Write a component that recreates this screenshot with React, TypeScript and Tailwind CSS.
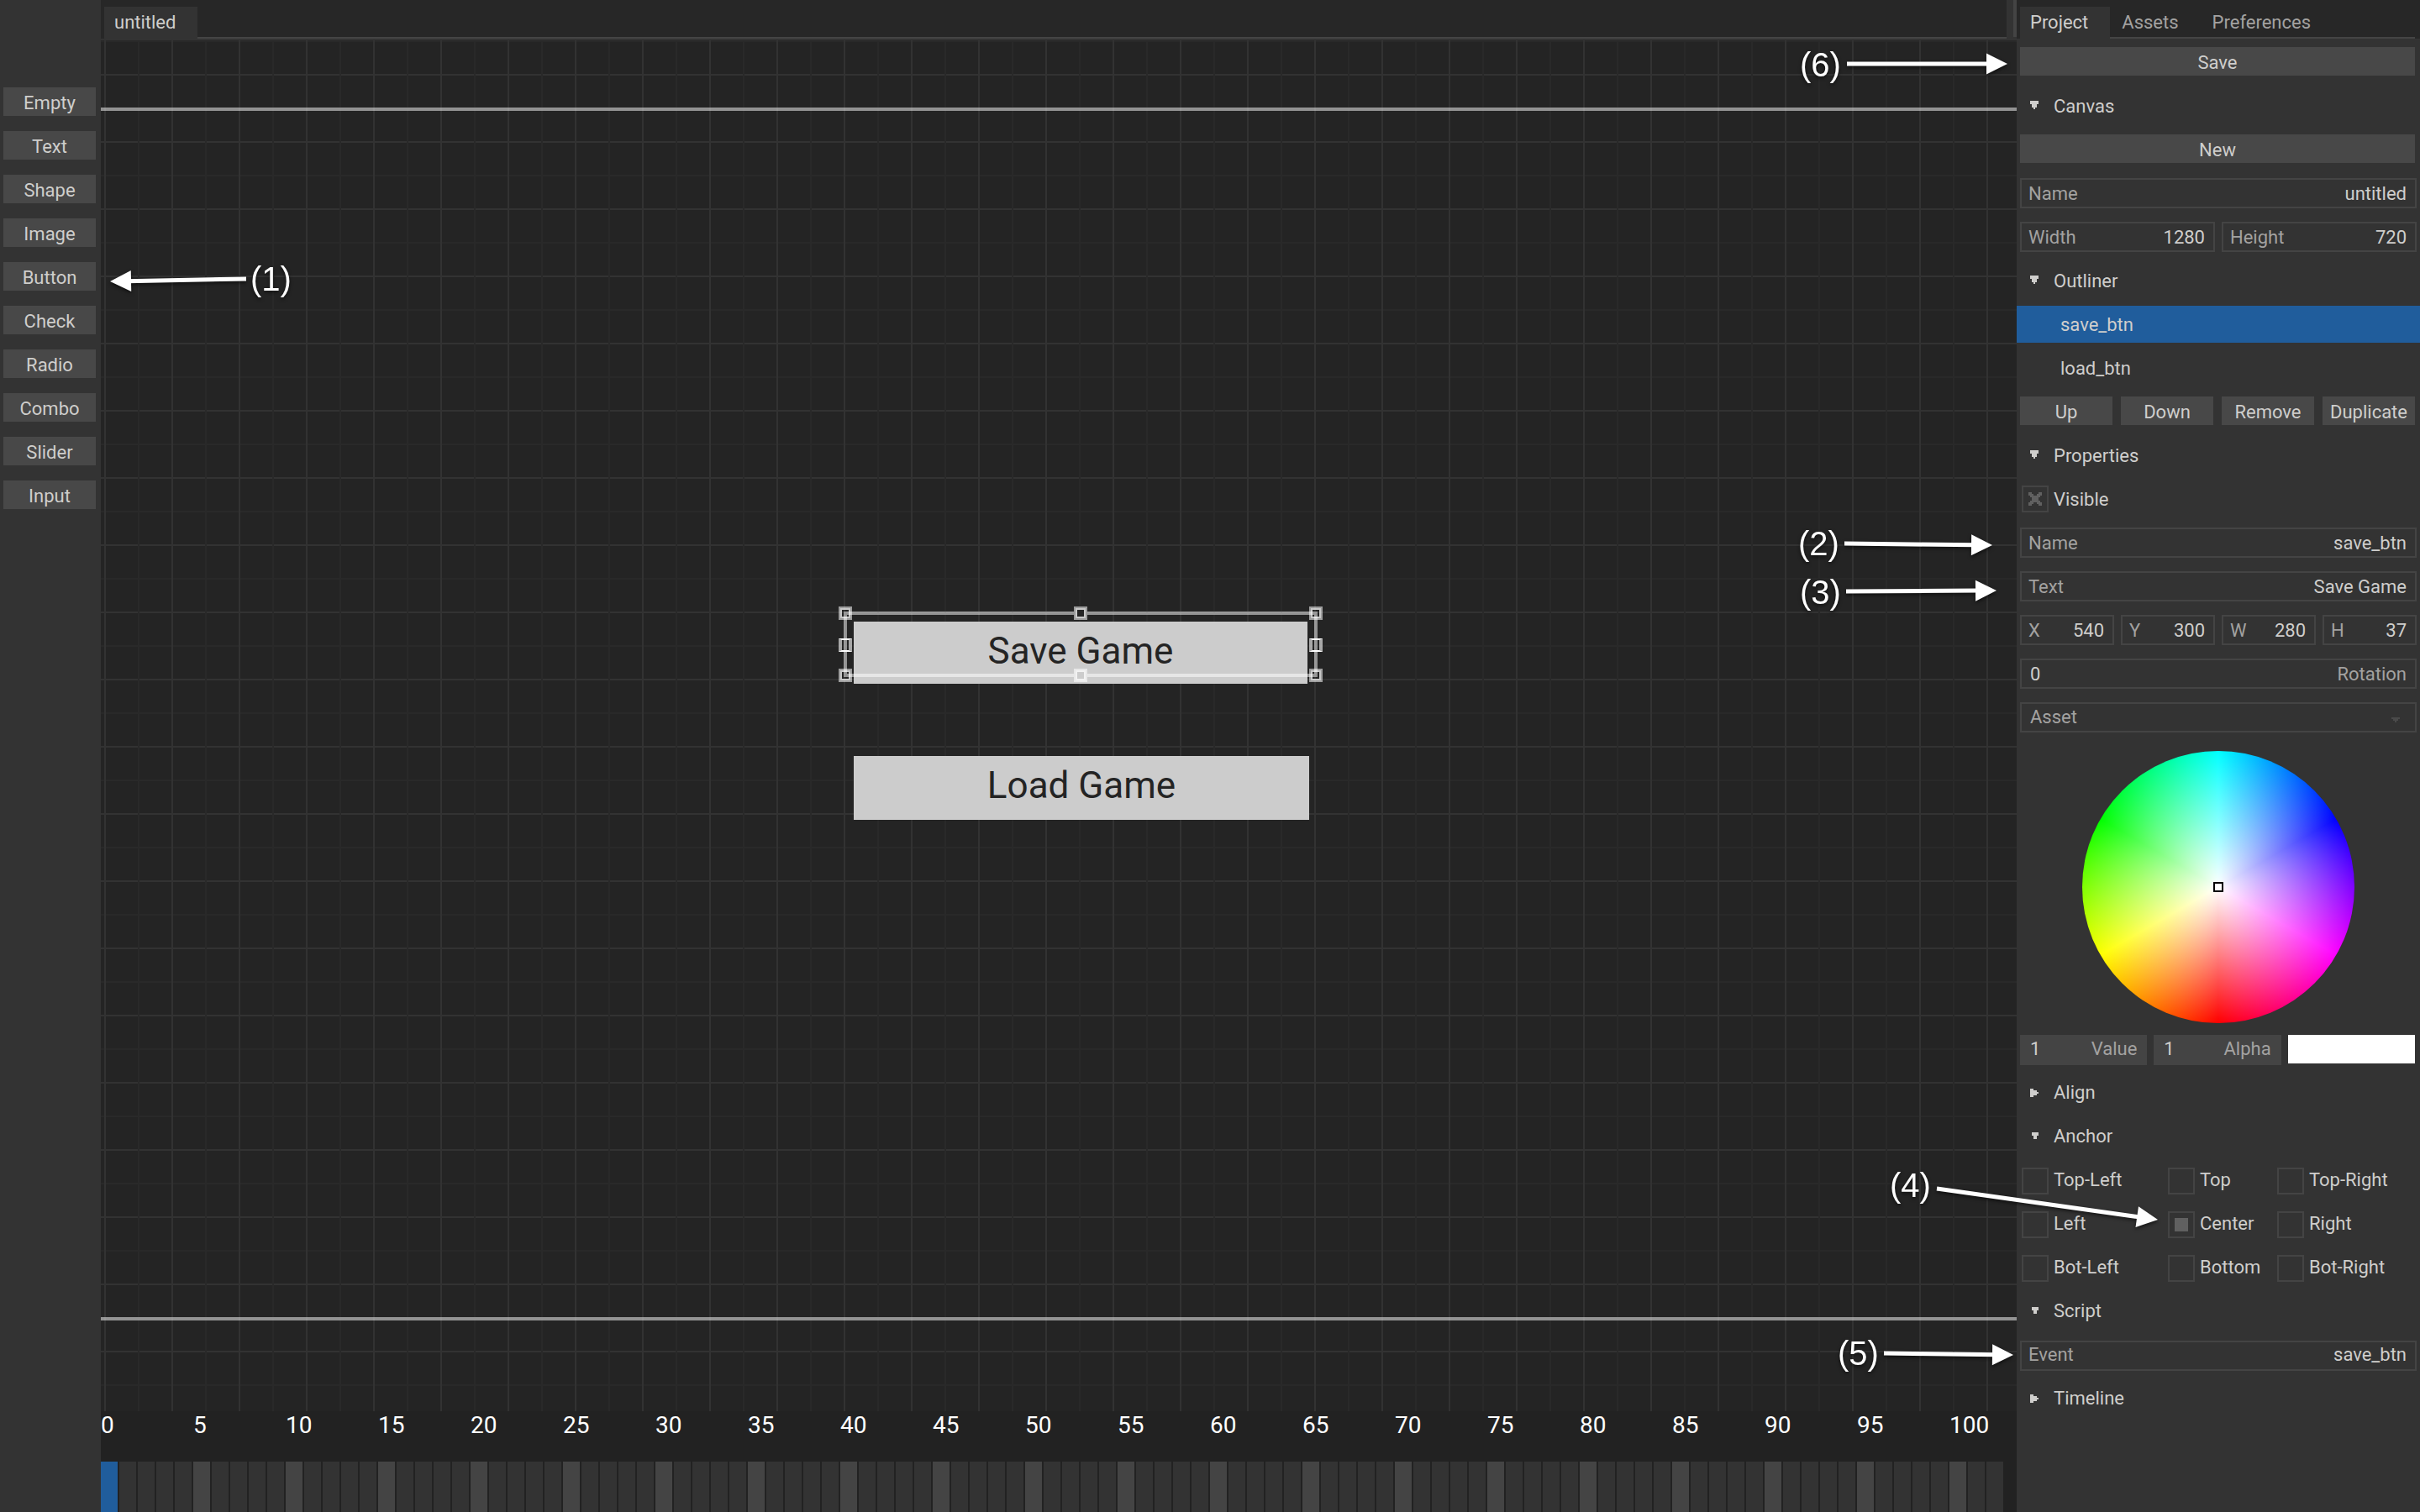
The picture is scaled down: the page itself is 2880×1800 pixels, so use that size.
import React, { useState } from "react";

const TOOLS = ["Empty", "Text", "Shape", "Image", "Button", "Check", "Radio", "Combo", "Slider", "Input"];
const FRAME_COUNT = 103;

function Tab({ label, active = false }: { label: string; active?: boolean }) {
  return (
    <button
      type="button"
      role="tab"
      aria-selected={active}
      className={
        active
          ? "h-[38px] border-b-2 border-[#333333] bg-[#333333] pr-[26px] pl-3 text-[#cfcecc]"
          : "h-[38px] border-b-2 border-[#444444] pr-[26px] pl-[14px] text-[#a3a2a1]"
      }
    >
      {label}
    </button>
  );
}

function PushButton({ children }: { children: React.ReactNode }) {
  return (
    <button type="button" className="h-[34px] min-w-0 flex-1 bg-[#484848] text-center whitespace-nowrap">
      <span className="block h-full">{children}</span>
    </button>
  );
}

function Row({ children }: { children: React.ReactNode }) {
  return <div className="flex h-[52px] items-start pt-2 pr-1.5 pl-1">{children}</div>;
}

const ARROWS = {
  down: "M0 0h10v4H8v4H6v2H4V8H2V4H0z",
  downSmall: "M2 0h8v4H8v4H4V4H2z",
  right: "M0 0h4v2h4v2h2v2H8v2H4v2H0z",
};

function Header({ label, arrow = "down" }: { label: string; arrow?: keyof typeof ARROWS }) {
  return (
    <button
      type="button"
      aria-expanded={arrow !== "right"}
      className="flex h-[52px] w-full items-start gap-[18px] pt-2 pl-4 text-left"
    >
      <svg width="10" height="10" viewBox="0 0 10 10" shapeRendering="crispEdges" className="mt-3">
        <path d={ARROWS[arrow]} fill="#cfcecc" />
      </svg>
      {label}
    </button>
  );
}

function Field({
  id,
  label,
  value,
  low = false,
}: {
  id: string;
  label: string;
  value: string;
  low?: boolean;
}) {
  return (
    <div
      className={
        low
          ? "flex h-9 min-w-0 flex-1 items-start border-2 border-[#444444] pr-2.5 pl-2 leading-[30px]"
          : "flex h-9 min-w-0 flex-1 items-start border-2 border-[#444444] pr-2.5 pl-2 leading-[34px]"
      }
    >
      <label htmlFor={id} className="text-[#a3a2a1]">
        {label}
      </label>
      <input id={id} type="text" defaultValue={value} className="w-0 min-w-0 flex-1 bg-transparent text-right outline-none" />
    </div>
  );
}

function NumberBox({ id, label, value }: { id: string; label: string; value: string }) {
  return (
    <div className="flex h-9 min-w-0 items-start bg-[#444444] px-3">
      <input id={id} type="text" defaultValue={value} className="w-0 min-w-0 flex-1 bg-transparent outline-none" />
      <label htmlFor={id} className="text-[#a3a2a1]">
        {label}
      </label>
    </div>
  );
}

function AnchorRow({ options }: { options: string[] }) {
  return (
    <div className="grid h-[52px] grid-cols-[174px_130px_1fr] items-start pl-1.5">
      {options.map((option) => (
        <label key={option} className="flex items-start gap-1.5 pt-2">
          <input
            type="radio"
            name="anchor"
            defaultChecked={option === "Center"}
            className="mt-0.5 size-8 appearance-none border-2 border-[#444444] p-1.5 before:block before:size-4 checked:before:bg-[#606060]"
          />
          {option}
        </label>
      ))}
    </div>
  );
}

function Handle({ className }: { className: string }) {
  return (
    <div className={`absolute size-4 border-2 border-white/55 ${className}`}>
      <div className="size-full border-2 border-white/75" />
    </div>
  );
}

function SideHandle({ className }: { className: string }) {
  return (
    <div
      className={`absolute top-8 h-4 w-4 border-x-4 border-y-2 border-x-white/60 border-y-white ${className}`}
    />
  );
}

const NOTES = [
  { n: 1, place: "top-[309px] left-[298px]", from: [293, 332], to: [131, 335] },
  { n: 2, place: "top-[624px] left-[2140px]", from: [2195, 647], to: [2371, 649] },
  { n: 3, place: "top-[682px] left-[2142px]", from: [2197, 704], to: [2376, 703] },
  { n: 4, place: "top-[1388px] left-[2249px]", from: [2305, 1415], to: [2568, 1452] },
  { n: 5, place: "top-[1588px] left-[2187px]", from: [2242, 1611], to: [2396, 1613] },
  { n: 6, place: "top-[54px] left-[2142px]", from: [2198, 76], to: [2389, 76] },
];

function Annotations() {
  return (
    <div className="pointer-events-none absolute inset-0 [filter:drop-shadow(0px_2px_2px_rgba(0,0,0,0.6))]">
      <svg className="absolute inset-0 size-full">
        {NOTES.map(({ n, from, to }) => {
          const length = Math.hypot(to[0] - from[0], to[1] - from[1]);
          const angle = (Math.atan2(to[1] - from[1], to[0] - from[0]) * 180) / Math.PI;
          return (
            <g key={n} transform={`translate(${from[0]} ${from[1]}) rotate(${angle})`} fill="#ffffff">
              <rect x="0" y="-2.5" width={length - 20} height="5" />
              <path d={`M${length} 0l-25 -12.5v25z`} />
            </g>
          );
        })}
      </svg>
      {NOTES.map(({ n, place }) => (
        <span
          key={n}
          className={`absolute font-['Liberation_Sans',sans-serif] text-[40px] leading-[46px] text-white ${place}`}
        >
          ({n})
        </span>
      ))}
    </div>
  );
}

function Canvas() {
  return (
    <div className="relative flex-1 overflow-hidden bg-[#242424] bg-[linear-gradient(90deg,#323232_2px,transparent_2px),linear-gradient(90deg,#292929_2px,transparent_2px),linear-gradient(#323232_2px,transparent_2px),linear-gradient(#292929_2px,transparent_2px)] [background-position:4px_0,44px_0,0_40px,0_0] [background-size:80px_80px]">
      <div className="absolute inset-x-0 top-20 h-1 bg-white/50" />
      <div className="absolute inset-x-0 top-[1520px] h-1 bg-white/50" />
      <button
        type="button"
        className="absolute top-[692px] left-[896px] h-[74px] w-[540px] bg-[#cccccc] text-center text-[44px] leading-[70px] text-[#242424]"
      >
        <span className="block h-full">Save Game</span>
      </button>
      <button
        type="button"
        className="absolute top-[852px] left-[896px] h-[76px] w-[542px] bg-[#cccccc] text-center text-[44px] leading-[70px] text-[#242424]"
      >
        <span className="block h-full">Load Game</span>
      </button>
      <div className="absolute top-[680px] left-[884px] h-[78px] w-[564px]">
        <div className="absolute inset-0 border-4 border-white/50" />
        <Handle className="-top-1.5 -left-1.5" />
        <Handle className="-top-1.5 left-[274px] bg-[#242424]" />
        <Handle className="-top-1.5 -right-1.5" />
        <SideHandle className="-left-1.5" />
        <SideHandle className="-right-1.5" />
        <Handle className="-bottom-1.5 -left-1.5" />
        <Handle className="-bottom-1.5 left-[274px] bg-[#cccccc]" />
        <Handle className="-right-1.5 -bottom-1.5" />
      </div>
    </div>
  );
}

function Timeline() {
  const frames = Array.from({ length: FRAME_COUNT }, (_, i) => i);
  return (
    <div className="h-[120px] overflow-hidden bg-[#222222]">
      <div className="flex h-[60px] text-[28px] leading-[34px] text-white">
        {frames
          .filter((i) => i % 5 === 0)
          .map((i) => (
            <span key={i} className="w-[110px] shrink-0">
              {i}
            </span>
          ))}
      </div>
      <div className="flex h-[60px] gap-0.5">
        {frames.map((i) => (
          <div
            key={i}
            className={
              i === 0
                ? "w-5 shrink-0 bg-[#205d9c]"
                : i % 5 === 0
                  ? "w-5 shrink-0 bg-[#444444]"
                  : "w-5 shrink-0 bg-[#333333]"
            }
          />
        ))}
      </div>
    </div>
  );
}

export default function App() {
  const [visible, setVisible] = useState(true);
  return (
    <div className="relative flex h-screen overflow-hidden bg-[#333333] font-['Roboto',sans-serif] text-[22px] leading-[38px] text-[#cfcecc]">
      <aside className="flex w-[120px] shrink-0 flex-col gap-[18px] pt-[104px] pr-1.5 pl-1">
        {TOOLS.map((tool) => (
          <button key={tool} type="button" className="h-[34px] bg-[#484848] text-center">
            <span className="block h-full">{tool}</span>
          </button>
        ))}
      </aside>

      <main className="flex min-w-0 flex-1 flex-col">
        <div className="flex h-12 items-start">
          <div role="tablist" className="flex h-[46px] flex-1 bg-[#272727] pt-2 pl-1">
            <Tab label="untitled" active />
            <div className="flex-1 border-b-2 border-[#444444]" />
          </div>
          <div className="h-11 w-3 border-r-4 border-[#444444]" />
        </div>
        <Canvas />
        <Timeline />
      </main>

      <aside className="w-[480px] shrink-0">
        <div role="tablist" className="mb-0.5 flex h-[46px] bg-[#272727] pt-2 pl-1">
          <Tab label="Project" active />
          <Tab label="Assets" />
          <Tab label="Preferences" />
          <div className="mr-1.5 flex-1 border-b-2 border-[#444444]" />
        </div>

        <Row>
          <PushButton>Save</PushButton>
        </Row>
        <Header label="Canvas" />
        <Row>
          <PushButton>New</PushButton>
        </Row>
        <div className="flex h-[52px] px-1 pt-2">
          <Field id="canvas-name" label="Name" value="untitled" />
        </div>
        <div className="flex h-[52px] gap-2 px-1 pt-2">
          <Field id="canvas-width" label="Width" value="1280" />
          <Field id="canvas-height" label="Height" value="720" />
        </div>

        <Header label="Outliner" />
        <ul>
          <li className="h-[52px] pt-1">
            <button type="button" className="block h-11 w-full bg-[#205d9c] pl-[52px] text-left leading-[46px]">
              <span className="block h-full">save_btn</span>
            </button>
          </li>
          <li className="h-[52px] pt-1">
            <button type="button" className="block h-11 w-full pl-[52px] text-left leading-[46px]">
              <span className="block h-full">load_btn</span>
            </button>
          </li>
        </ul>
        <div className="flex h-[52px] gap-2.5 pt-2 pr-1.5 pl-1">
          <PushButton>Up</PushButton>
          <PushButton>Down</PushButton>
          <PushButton>Remove</PushButton>
          <PushButton>Duplicate</PushButton>
        </div>

        <Header label="Properties" />
        <label className="flex h-[52px] items-start gap-1.5 pt-2 pl-1.5">
          <span className="relative mt-0.5 block size-8">
            <input
              type="checkbox"
              checked={visible}
              onChange={(e) => setVisible(e.target.checked)}
              className="block size-8 appearance-none border-2 border-[#444444]"
            />
            {visible && (
              <svg
                viewBox="0 0 16 16"
                shapeRendering="crispEdges"
                className="pointer-events-none absolute top-2 left-2 size-4"
              >
                <path
                  d="M0 0h4v2h2v2h4V2h2V0h4v4h-2v2h-2v4h2v2h2v4h-4v-2h-2v-2H6v2H4v2H0v-4h2v-2h2V6H2V4H0z"
                  fill="#606060"
                />
              </svg>
            )}
          </span>
          Visible
        </label>
        <div className="flex h-[52px] px-1 pt-2">
          <Field id="element-name" label="Name" value="save_btn" />
        </div>
        <div className="flex h-[52px] px-1 pt-2">
          <Field id="element-text" label="Text" value="Save Game" />
        </div>
        <div className="flex h-[52px] gap-2 px-1 pt-2">
          <Field id="element-x" label="X" value="540" />
          <Field id="element-y" label="Y" value="300" />
          <Field id="element-w" label="W" value="280" />
          <Field id="element-h" label="H" value="37" />
        </div>
        <div className="flex h-[52px] px-1 pt-2">
          <div className="flex h-9 flex-1 items-start border-2 border-[#444444] px-2.5 leading-[34px]">
            <input
              id="element-rotation"
              type="text"
              defaultValue="0"
              className="w-0 min-w-0 flex-1 bg-transparent outline-none"
            />
            <label htmlFor="element-rotation" className="text-[#a3a2a1]">
              Rotation
            </label>
          </div>
        </div>
        <div className="h-[52px] px-1 pt-2">
          <div className="relative h-9">
            <select
              aria-label="Asset"
              className="block h-9 w-full appearance-none border-2 border-[#444444] bg-transparent px-2.5 leading-[32px] text-[#a3a2a1] outline-none"
            >
              <option>Asset</option>
            </select>
            <svg
              width="10"
              height="6"
              viewBox="0 0 10 6"
              shapeRendering="crispEdges"
              className="pointer-events-none absolute top-[18px] right-5"
            >
              <path d="M0 0h10v2H8v2H6v2H4V4H2V2H0z" fill="#4a4a4a" />
            </svg>
          </div>
        </div>

        <div className="flex justify-center pt-[14px] pb-1.5">
          <div className="flex size-[324px] items-center justify-center rounded-full bg-[radial-gradient(closest-side,#ffffff,rgba(255,255,255,0)),conic-gradient(#00ffff,#0000ff,#ff00ff,#ff0000,#ffff00,#00ff00,#00ffff)]">
            <div className="size-3 border-2 border-black bg-white" />
          </div>
        </div>

        <div className="leading-[34px]">
          <div className="grid h-[52px] grid-cols-3 items-start gap-2 pt-2 pr-1.5 pl-1">
            <NumberBox id="color-value" label="Value" value="1" />
            <NumberBox id="color-alpha" label="Alpha" value="1" />
            <div className="h-[34px] bg-white" />
          </div>
          <Header label="Align" arrow="right" />
          <Header label="Anchor" arrow="downSmall" />
          <AnchorRow options={["Top-Left", "Top", "Top-Right"]} />
          <AnchorRow options={["Left", "Center", "Right"]} />
          <AnchorRow options={["Bot-Left", "Bottom", "Bot-Right"]} />
          <Header label="Script" arrow="downSmall" />
          <div className="flex h-[52px] px-1 pt-2">
            <Field id="script-event" label="Event" value="save_btn" low />
          </div>
          <Header label="Timeline" arrow="right" />
        </div>
      </aside>

      <Annotations />
    </div>
  );
}
